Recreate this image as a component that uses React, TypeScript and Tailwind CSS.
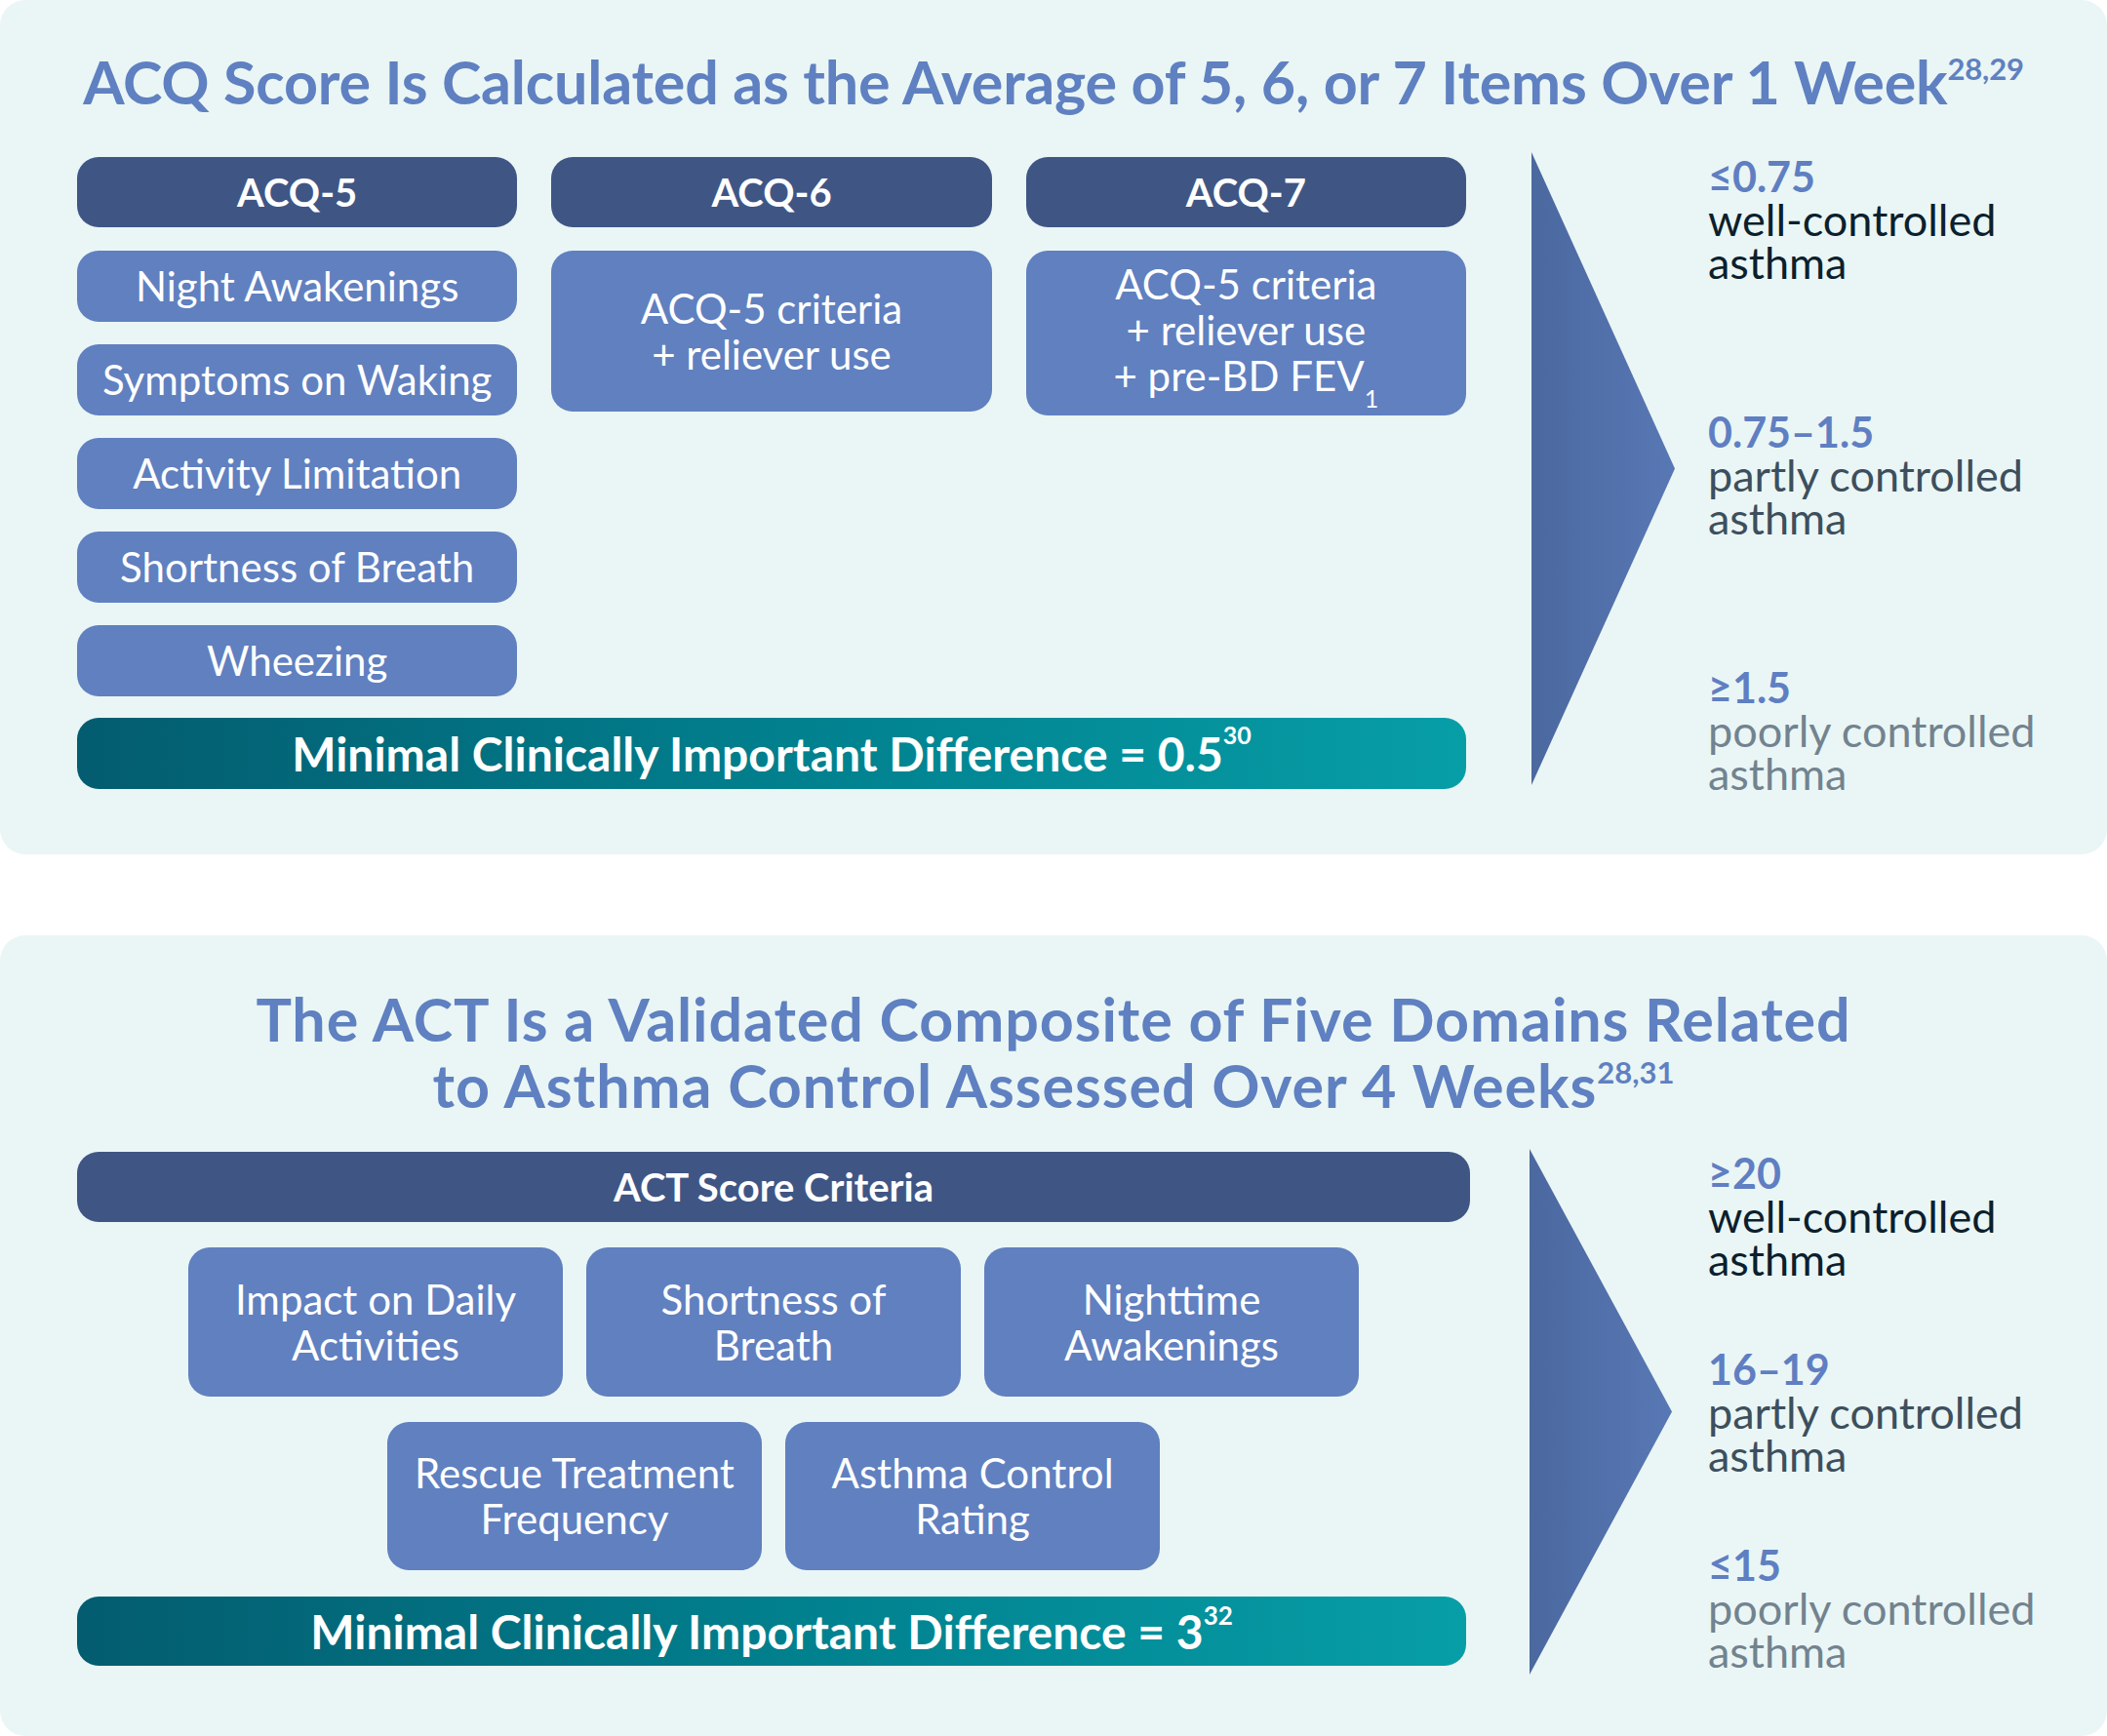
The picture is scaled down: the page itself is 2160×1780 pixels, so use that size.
const acq5 = [
  "Night Awakenings",
  "Symptoms on Waking",
  "Activity Limitation",
  "Shortness of Breath",
  "Wheezing",
];

const actRowOne = [
  ["Impact on Daily", "Activities"],
  ["Shortness of", "Breath"],
  ["Nighttime", "Awakenings"],
];

const actRowTwo = [
  ["Rescue Treatment", "Frequency"],
  ["Asthma Control", "Rating"],
];

const acqLevels = [
  { value: "≤0.75", label: "well-controlled", tone: "text-[#0c1f2e]" },
  { value: "0.75–1.5", label: "partly controlled", tone: "text-[#3d4f5d]" },
  { value: "≥1.5", label: "poorly controlled", tone: "text-[#72838f]" },
];

const actLevels = [
  { value: "≥20", label: "well-controlled", tone: "text-[#0c1f2e]" },
  { value: "16–19", label: "partly controlled", tone: "text-[#3d4f5d]" },
  { value: "≤15", label: "poorly controlled", tone: "text-[#72838f]" },
];

function Arrow({ id, width, height }: { id: string; width: number; height: number }) {
  return (
    <svg width={width} height={height} viewBox={`0 0 ${width} ${height}`} className="shrink-0">
      <defs>
        <linearGradient id={id} x1="0" y1="0" x2="1" y2="0">
          <stop offset="0" stopColor="#4b689f" />
          <stop offset="1" stopColor="#5878b5" />
        </linearGradient>
      </defs>
      <polygon points={`0,0 ${width},${height / 2} 0,${height}`} fill={`url(#${id})`} />
    </svg>
  );
}

function Levels({
  items,
  className,
}: {
  items: { value: string; label: string; tone: string }[];
  className: string;
}) {
  return (
    <div className={`flex flex-col ${className}`}>
      {items.map((item) => (
        <p key={item.value} className={`h-[132px] text-[45px] leading-[44px] ${item.tone}`}>
          <span className="text-[43px] font-bold text-[#5f7fc2]">{item.value}</span>
          <br />
          {item.label}
          <br />
          asthma
        </p>
      ))}
    </div>
  );
}

function Header({ children }: { children: React.ReactNode }) {
  return (
    <div className="flex h-[72px] items-center justify-center rounded-[22px] bg-[#3f5685] text-[40px] font-bold text-white">
      {children}
    </div>
  );
}

function Mcid({ children, className }: { children: React.ReactNode; className: string }) {
  return (
    <div
      className={`flex w-[1424px] items-center justify-center rounded-[22px] bg-linear-to-r from-[#035c6f] via-[#017f8d] to-[#079ea7] text-[48px] font-bold text-white ${className}`}
    >
      {children}
    </div>
  );
}

export default function App() {
  return (
    <div className="flex h-[1780px] w-[2160px] flex-col bg-white font-['Lato',sans-serif]">
      <section className="flex h-[876px] flex-col rounded-[26px] bg-[#eaf6f5]">
        <h1 className="pt-[53px] text-center text-[61px] font-bold leading-none tracking-[-0.003em] text-[#5f80c1]">
          ACQ Score Is Calculated as the Average of 5, 6, or 7 Items Over 1 Week
          <sup className="-top-[25px] text-[31px]">28,29</sup>
        </h1>

        <div className="mt-[42px] flex items-start pl-[79px]">
          <div className="flex w-[1424px] flex-col pt-[5px]">
            <div className="grid grid-cols-3 items-start gap-x-[35px]">
              <div className="flex flex-col gap-[24px]">
                <Header>ACQ-5</Header>
                <div className="flex flex-col gap-[23px]">
                  {acq5.map((item) => (
                    <div
                      key={item}
                      className="flex h-[73px] items-center justify-center rounded-[22px] bg-[#6080c0] text-[42px] text-white"
                    >
                      {item}
                    </div>
                  ))}
                </div>
              </div>

              <div className="flex flex-col gap-[24px]">
                <Header>ACQ-6</Header>
                <div className="flex h-[165px] flex-col items-center justify-center rounded-[22px] bg-[#6080c0] text-[42px] leading-[47px] text-white">
                  <span>ACQ-5 criteria</span>
                  <span>+ reliever use</span>
                </div>
              </div>

              <div className="flex flex-col gap-[24px]">
                <Header>ACQ-7</Header>
                <div className="flex h-[169px] flex-col items-center justify-center rounded-[22px] bg-[#6080c0] pb-[6px] text-[42px] leading-[47px] text-white">
                  <span>ACQ-5 criteria</span>
                  <span>+ reliever use</span>
                  <span>
                    + pre-BD FEV<sub className="-bottom-[17px] text-[25px]">1</sub>
                  </span>
                </div>
              </div>
            </div>

            <Mcid className="mt-[22px] h-[73px]">
              Minimal Clinically Important Difference = 0.5
              <sup className="-top-[20px] text-[25px]">30</sup>
            </Mcid>
          </div>

          <div className="ml-[67px]">
            <Arrow id="acq-arrow" width={147} height={649} />
          </div>

          <Levels items={acqLevels} className="ml-[34px] gap-[130px] pt-[2px]" />
        </div>
      </section>

      <section className="mt-[83px] flex h-[821px] flex-col rounded-[26px] bg-[#eaf6f5]">
        <h2 className="pt-[52px] text-center text-[61px] font-bold leading-[68px] tracking-[0.015em] text-[#5f80c1]">
          The ACT Is a Validated Composite of Five Domains Related
          <br />
          to Asthma Control Assessed Over 4 Weeks
          <sup className="-top-[25px] text-[31px] tracking-normal">28,31</sup>
        </h2>

        <div className="mt-[31px] flex items-start pl-[79px]">
          <div className="flex w-[1428px] flex-col pt-[3px]">
            <Header>ACT Score Criteria</Header>

            <div className="mt-[26px] flex justify-center gap-[24px]">
              {actRowOne.map((lines) => (
                <div
                  key={lines[0]}
                  className="flex h-[153px] w-[384px] flex-col items-center justify-center rounded-[22px] bg-[#6080c0] text-[42px] leading-[47px] text-white"
                >
                  {lines.map((line) => (
                    <span key={line}>{line}</span>
                  ))}
                </div>
              ))}
            </div>

            <div className="mt-[26px] flex justify-center gap-[24px]">
              {actRowTwo.map((lines) => (
                <div
                  key={lines[0]}
                  className="flex h-[152px] w-[384px] flex-col items-center justify-center rounded-[22px] bg-[#6080c0] text-[42px] leading-[47px] text-white"
                >
                  {lines.map((line) => (
                    <span key={line}>{line}</span>
                  ))}
                </div>
              ))}
            </div>

            <Mcid className="mt-[27px] h-[71px]">
              Minimal Clinically Important Difference = 3
              <sup className="-top-[17px] text-[26px]">32</sup>
            </Mcid>
          </div>

          <div className="ml-[61px]">
            <Arrow id="act-arrow" width={146} height={539} />
          </div>

          <Levels items={actLevels} className="ml-[37px] gap-[69px] pt-[2px]" />
        </div>
      </section>
    </div>
  );
}
